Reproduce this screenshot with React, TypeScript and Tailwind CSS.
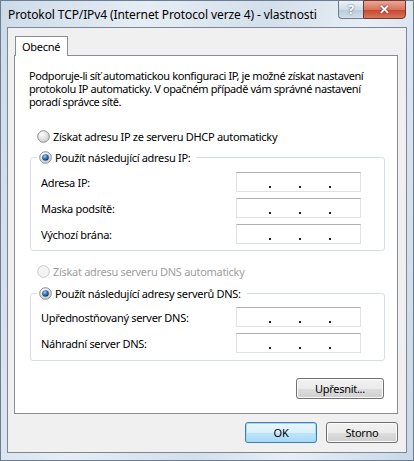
import React from "react";

const font = { fontFamily: '"Noto Sans", "Open Sans", sans-serif' };

function Radio({ checked, disabled }: { checked?: boolean; disabled?: boolean }) {
  return (
    <svg width="13" height="13" viewBox="0 0 13 13" className="shrink-0">
      <defs>
        <radialGradient id="rg" cx="0.35" cy="0.3" r="0.8">
          <stop offset="0" stopColor="#ffffff" />
          <stop offset="1" stopColor="#c9c9c9" />
        </radialGradient>
        <radialGradient id="dot" cx="0.4" cy="0.35" r="0.7">
          <stop offset="0" stopColor="#9fd7f7" />
          <stop offset="0.5" stopColor="#2a6fb0" />
          <stop offset="1" stopColor="#0f2d58" />
        </radialGradient>
      </defs>
      <circle cx="6.5" cy="6.5" r="5.8" fill={disabled ? "#f4f4f4" : "url(#rg)"} stroke={disabled ? "#c8c8c8" : "#8c8c8c"} strokeWidth="1" />
      {checked && <circle cx="6.5" cy="6.5" r="3.3" fill="url(#dot)" />}
    </svg>
  );
}

function IpBox() {
  return (
    <div className="relative h-[20px] w-[125px] border border-[#dfe3e8] border-t-[#abadb3] bg-white">
      <span className="absolute bottom-[3px] left-[32px] h-[2px] w-[2px] bg-[#222]" />
      <span className="absolute bottom-[3px] left-[62px] h-[2px] w-[2px] bg-[#222]" />
      <span className="absolute bottom-[3px] left-[92px] h-[2px] w-[2px] bg-[#222]" />
    </div>
  );
}

function Row({ label }: { label: string }) {
  return (
    <div className="flex h-[20px] items-center justify-between">
      <span>{label}</span>
      <IpBox />
    </div>
  );
}

function Btn({ children, primary, w }: { children: React.ReactNode; primary?: boolean; w: string }) {
  return (
    <div
      className={`flex h-[21px] items-center justify-center rounded-[3px] border text-[11px] text-black ${w} ${
        primary ? "border-[#3c7fb1] shadow-[inset_0_0_0_1px_#a7d8f0]" : "border-[#707070] shadow-[inset_0_0_0_1px_#fbfbfb]"
      }`}
      style={{
        background: primary
          ? "linear-gradient(#eaf6fd 0%, #d9f0fc 50%, #bee6fd 51%, #a7d9f5 100%)"
          : "linear-gradient(#f2f2f2 0%, #ebebeb 50%, #dddddd 51%, #cfcfcf 100%)",
      }}
    >
      {children}
    </div>
  );
}

export default function App() {
  return (
    <div
      className="flex h-[461px] w-[414px] flex-col border border-[#6b7d92] px-[6px] pb-[7px] text-[11px] leading-[13px] tracking-[-0.3px] text-black"
      style={{
        ...font,
        background: "linear-gradient(100deg, #cddbe9 0%, #e6edf4 30%, #d3dfeb 55%, #e8eef5 75%, #c9d8e7 100%)",
      }}
    >
      {/* title bar */}
      <div className="relative flex h-[26px] items-center">
        <span className="ml-[1px] mt-[1px] text-[12px] tracking-[-0.1px] text-black">Protokol TCP/IPv4 (Internet Protocol verze 4) - vlastnosti</span>
        <div className="absolute right-[1px] top-[-1px] flex">
          <div
            className="flex h-[19px] w-[25px] items-center justify-center rounded-bl-[4px] border border-r-0 border-[#6c7c8f] text-[13px] font-bold text-white"
            style={{ background: "linear-gradient(#eef3f8, #cfdbe6 50%, #b9c9d8 51%, #d3e0eb)", textShadow: "0 0 2px #345" }}
          >
            ?
          </div>
          <div
            className="flex h-[19px] w-[43px] items-center justify-center rounded-br-[4px] border border-[#6c3a30] text-[13px] font-bold text-white"
            style={{ background: "linear-gradient(#e9a898, #d9735d 50%, #c5452c 51%, #d7765d)", textShadow: "0 0 2px #400" }}
          >
            ✕
          </div>
        </div>
      </div>

      {/* client area */}
      <div className="flex flex-1 flex-col border border-[#7a8796] bg-[#f0f0f0] pl-[6px] pr-[8px] pt-[8px]">
        <div className="relative z-10 -mb-[1px] ml-[1px] flex h-[20px] w-[53px] items-center border border-b-0 border-[#898c95] bg-white pl-[6px]">
          Obecné
        </div>
        <div className="flex h-[359px] flex-col border border-[#898c95] bg-white pl-[14px] pr-[12px] pt-[13px]">
          <p className="whitespace-nowrap tracking-[-0.4px]">
            Podporuje-li síť automatickou konfiguraci IP, je možné získat nastavení
            <br />
            protokolu IP automaticky. V opačném případě vám správné nastavení
            <br />
            poradí správce sítě.
          </p>

          <div className="mt-[21px] flex h-[14px] items-center gap-[3px] pl-[8px]">
            <Radio />
            <span>Získat adresu IP ze serveru DHCP automaticky</span>
          </div>

          <fieldset className="ml-[1px] mt-[7px] rounded-[3px] border border-[#d5dfe5] pb-[6px] pl-[10px] pr-[23px]">
            <legend className="ml-[-4px] flex h-[14px] items-center gap-[3px] pl-[2px] pr-[6px]">
              <Radio checked />
              <span>Použít následující adresu IP:</span>
            </legend>
            <div className="mt-[8px] flex flex-col gap-[6px]">
              <Row label="Adresa IP:" />
              <Row label="Maska podsítě:" />
              <Row label="Výchozí brána:" />
            </div>
          </fieldset>

          <div className="mt-[13px] flex h-[14px] items-center gap-[3px] pl-[8px] text-[#a0a0a0]">
            <Radio disabled />
            <span>Získat adresu serveru DNS automaticky</span>
          </div>

          <fieldset className="ml-[1px] mt-[8px] rounded-[3px] border border-[#d5dfe5] pb-[7px] pl-[10px] pr-[23px]">
            <legend className="ml-[-4px] flex h-[14px] items-center gap-[3px] pl-[2px] pr-[6px]">
              <Radio checked />
              <span>Použít následující adresy serverů DNS:</span>
            </legend>
            <div className="mt-[7px] flex flex-col gap-[6px]">
              <Row label="Upřednostňovaný server DNS:" />
              <Row label="Náhradní server DNS:" />
            </div>
          </fieldset>

          <div className="mt-[17px] flex justify-end pr-[1px]">
            <Btn w="w-[88px]">Upřesnit...</Btn>
          </div>
        </div>

        <div className="mt-[8px] flex justify-end gap-[9px]">
          <Btn primary w="w-[72px]">OK</Btn>
          <Btn w="w-[72px]">Storno</Btn>
        </div>
      </div>
    </div>
  );
}
